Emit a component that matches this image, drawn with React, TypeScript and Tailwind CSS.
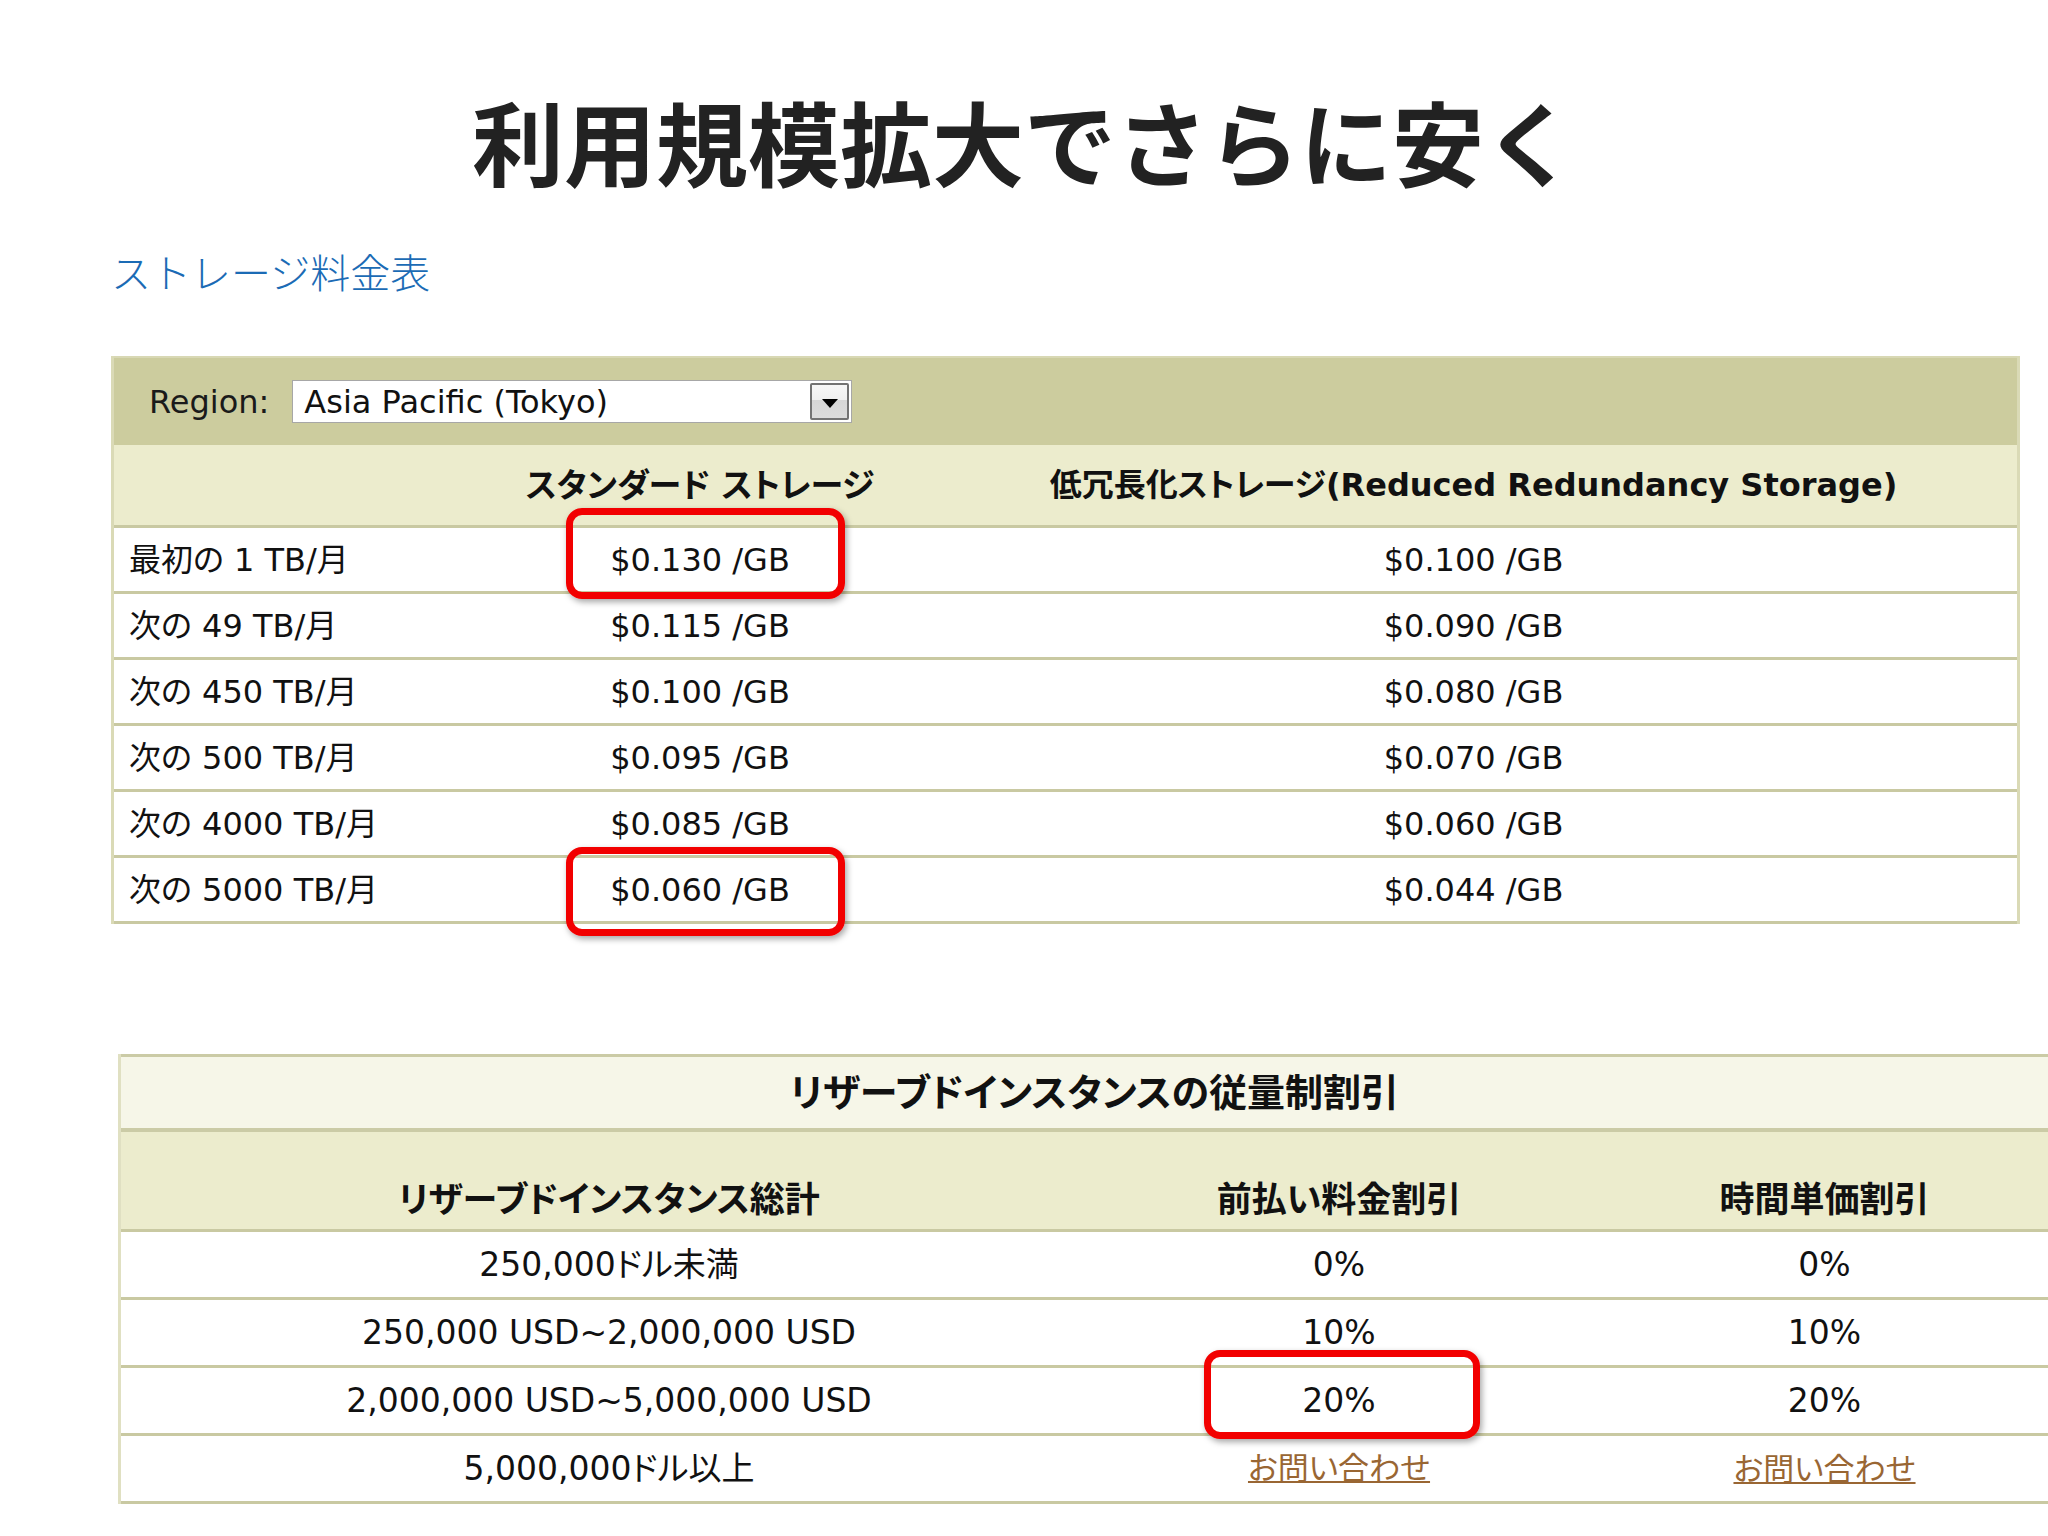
import clsx from "clsx";

const mix = "font-['DejaVu_Sans','Noto_Sans_CJK_JP',sans-serif] [font-feature-settings:'palt']";

const storageRows = [
  { tier: "最初の 1 TB/月", std: "$0.130 /GB", rrs: "$0.100 /GB", mark: "top" },
  { tier: "次の 49 TB/月", std: "$0.115 /GB", rrs: "$0.090 /GB" },
  { tier: "次の 450 TB/月", std: "$0.100 /GB", rrs: "$0.080 /GB" },
  { tier: "次の 500 TB/月", std: "$0.095 /GB", rrs: "$0.070 /GB" },
  { tier: "次の 4000 TB/月", std: "$0.085 /GB", rrs: "$0.060 /GB" },
  { tier: "次の 5000 TB/月", std: "$0.060 /GB", rrs: "$0.044 /GB", mark: "bottom" },
];

const reservedRows = [
  { total: "250,000ドル未満", upfront: "0%", hourly: "0%" },
  { total: "250,000 USD~2,000,000 USD", upfront: "10%", hourly: "10%" },
  { total: "2,000,000 USD~5,000,000 USD", upfront: "20%", hourly: "20%", mark: true },
  { total: "5,000,000ドル以上", upfront: null, hourly: null },
];

function Highlight({ className }: { className: string }) {
  return (
    <div
      className={clsx(
        "pointer-events-none absolute z-10 rounded-[16px] border-[7px] border-[#f20000] shadow-[2px_3px_6px_rgba(0,0,0,0.35)]",
        className
      )}
    />
  );
}

function ContactLink() {
  return (
    <a href="#" className="text-[31px] leading-none text-[#996633] underline decoration-2 underline-offset-[2px]">
      お問い合わせ
    </a>
  );
}

function RegionSelect() {
  return (
    <div className="flex h-[43px] w-[560px] items-center border border-[#a7a7a7] bg-white pl-[11px]">
      <span className="flex-1 text-[32px] leading-none text-[#111]">Asia Pacific (Tokyo)</span>
      <div className="mr-[2px] flex h-[37px] w-[39px] items-center justify-center rounded-[2px] border-2 border-[#737373] bg-[linear-gradient(#f7f7f7_0%,#f0f0f0_45%,#d6d6d6_46%,#dcdcdc_100%)]">
        <svg width="16" height="10" viewBox="0 0 16 10" className="mt-[4px]">
          <polygon points="0,0 16,0 8,9" fill="#000" />
        </svg>
      </div>
    </div>
  );
}

function StorageTable() {
  return (
    <div className={clsx("ml-[111px] mt-[65px] w-[1909px] border-x-[3px] border-[#dadab6]", mix)}>
      <div className="flex h-[89px] items-center gap-[23px] border-t-2 border-[#d8d8b4] bg-[#cccc9e] pl-[35px]">
        <span className="text-[32px] leading-none text-[#1a1a1a]">Region:</span>
        <RegionSelect />
      </div>
      <div className="grid h-[83px] grid-cols-[356px_460px_1fr] items-center border-b-[3px] border-[#c9c9a2] bg-[#ececcd] text-center text-[#111]">
        <div />
        <div className="text-[33px] font-bold leading-none">スタンダード ストレージ</div>
        <div className="text-[32px] font-bold leading-none">低冗長化ストレージ(Reduced Redundancy Storage)</div>
      </div>
      {storageRows.map((row) => (
        <div
          key={row.tier}
          className="grid h-[66px] grid-cols-[356px_460px_1fr] items-center border-b-[3px] border-[#c9c9a2] bg-white text-[32px] leading-none text-[#111]"
        >
          <div className="pl-[15px]">{row.tier}</div>
          <div className="relative flex h-full items-center justify-center">
            {row.std}
            {row.mark === "top" && <Highlight className="left-[96px] top-[-20px] h-[91px] w-[279px]" />}
            {row.mark === "bottom" && <Highlight className="left-[96px] top-[-11px] h-[89px] w-[279px]" />}
          </div>
          <div className="text-center">{row.rrs}</div>
        </div>
      ))}
    </div>
  );
}

function ReservedTable() {
  return (
    <div className={clsx("ml-[118px] mt-[130px] w-[1950px] border-l-[3px] border-[#e0e0c2]", mix)}>
      <div className="flex h-[78px] items-center justify-center border-y-[3px] border-b-4 border-[#cbcba6] bg-[#f6f6e8] text-[38px] font-bold leading-none text-[#111]">
        リザーブドインスタンスの従量制割引
      </div>
      <div className="grid h-[100px] grid-cols-[976px_484px_1fr] items-end border-b-[3px] border-[#c9c9a2] bg-[#ececcd] pb-[11px] text-center text-[35px] font-bold leading-none text-[#111]">
        <div>リザーブドインスタンス総計</div>
        <div>前払い料金割引</div>
        <div>時間単価割引</div>
      </div>
      {reservedRows.map((row) => (
        <div
          key={row.total}
          className="grid h-[68px] grid-cols-[976px_484px_1fr] items-center border-b-[3px] border-[#c9c9a2] bg-white text-center text-[33px] leading-none text-[#111]"
        >
          <div>{row.total}</div>
          <div className="relative flex h-full items-center justify-center">
            {row.upfront ?? <ContactLink />}
            {row.mark && <Highlight className="left-[107px] top-[-18px] h-[89px] w-[276px]" />}
          </div>
          <div>{row.hourly ?? <ContactLink />}</div>
        </div>
      ))}
    </div>
  );
}

export default function App() {
  return (
    <div className="h-[1536px] w-[2048px] overflow-hidden bg-white pt-[94px]">
      <h1 className="text-center font-['Noto_Sans_CJK_JP',sans-serif] text-[92px] font-bold leading-none text-[#222]">
        利用規模拡大でさらに安く
      </h1>
      <h2 className="ml-[111px] mt-[65px] font-['Noto_Sans_CJK_JP',sans-serif] text-[40px] font-light leading-none text-[#1b6bb5]">
        ストレージ料金表
      </h2>
      <StorageTable />
      <ReservedTable />
    </div>
  );
}
